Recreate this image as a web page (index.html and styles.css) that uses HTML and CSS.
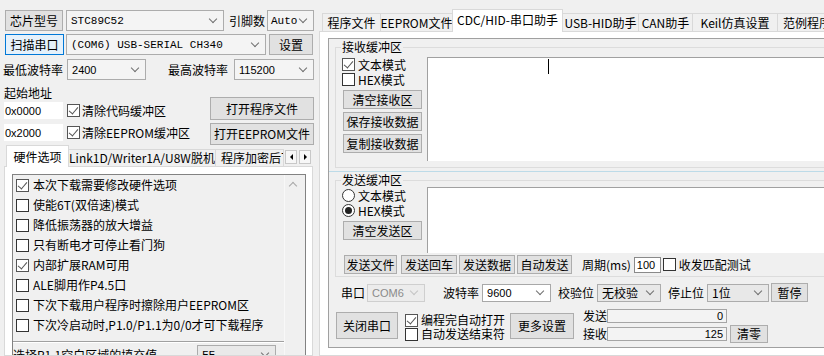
FILE: index.html
```html
<!DOCTYPE html>
<html lang="zh-CN">
<head>
<meta charset="utf-8">
<title>STC-ISP</title>
<link rel="stylesheet" href="styles.css">
</head>
<body>
<div class="app">
  <div class="left">
    <div class="row r1">
      <div class="btn b-chip">芯片型号</div>
      <div class="sel s-chip"><span class="mono">STC89C52</span></div>
      <span class="lbl l-pins">引脚数</span>
      <div class="sel s-pins"><span class="mono">Auto</span></div>
    </div>
    <div class="row r2">
      <div class="btn focus b-scan">扫描串口</div>
      <div class="sel s-port"><span class="mono">(COM6) USB-SERIAL CH340</span></div>
      <div class="btn b-set">设置</div>
    </div>
    <div class="row r3">
      <span class="lbl l-min">最低波特率</span>
      <div class="sel s-min"><span class="num">2400</span></div>
      <span class="lbl l-max">最高波特率</span>
      <div class="sel s-max"><span class="num">115200</span></div>
    </div>
    <div class="addr">
      <div class="addr-l">
        <div class="lbl">起始地址</div>
        <div class="arow a1"><div class="inp addr-in">0x0000</div><span class="cb on"></span><span class="ctext">清除代码缓冲区</span></div>
        <div class="arow a2"><div class="inp addr-in">0x2000</div><span class="cb on"></span><span class="ctext">清除EEPROM缓冲区</span></div>
      </div>
      <div class="addr-r">
        <div class="btn b-open1">打开程序文件</div>
        <div class="btn b-open2">打开EEPROM文件</div>
      </div>
    </div>
    <div class="ltabs">
      <div class="tab act lt1">硬件选项</div>
      <div class="tab lt2">Link1D/Writer1A/U8W脱机</div>
      <div class="tab lt3">程序加密后下载</div>
      <div class="tscroll"><span class="tsb tl"></span><span class="tsb tr"></span></div>
    </div>
    <div class="lpage">
      <div class="opts">
        <div class="opts-list">
          <div class="opt"><span class="cb on"></span>本次下载需要修改硬件选项</div>
          <div class="opt"><span class="cb"></span>使能6T(双倍速)模式</div>
          <div class="opt"><span class="cb"></span>降低振荡器的放大增益</div>
          <div class="opt"><span class="cb"></span>只有断电才可停止看门狗</div>
          <div class="opt"><span class="cb on"></span>内部扩展RAM可用</div>
          <div class="opt"><span class="cb"></span>ALE脚用作P4.5口</div>
          <div class="opt"><span class="cb"></span>下次下载用户程序时擦除用户EEPROM区</div>
          <div class="opt"><span class="cb"></span>下次冷启动时,P1.0/P1.1为0/0才可下载程序</div>
          <div class="hsep"></div>
          <div class="fill"><span class="lbl">选择P1.1空白区域的填充值</span><div class="sel s-ff"><span class="mono">FF</span></div></div>
        </div>
        <div class="vscroll"><span class="up"></span></div>
      </div>
    </div>
  </div>

  <div class="right">
    <div class="rtabs">
      <div class="tab rt1">程序文件</div>
      <div class="tab rt2">EEPROM文件</div>
      <div class="tab act rt3">CDC/HID-串口助手</div>
      <div class="tab rt4">USB-HID助手</div>
      <div class="tab rt5">CAN助手</div>
      <div class="tab rt6">Keil仿真设置</div>
      <div class="tab rt7">范例程序</div>
    </div>
    <div class="rpage">
      <div class="frame">
        <fieldset class="grp g-recv">
          <legend>接收缓冲区</legend>
          <div class="gbody">
            <div class="gside">
              <div class="chk c1"><span class="cb on"></span>文本模式</div>
              <div class="chk"><span class="cb"></span>HEX模式</div>
              <div class="btn gbtn gb1">清空接收区</div>
              <div class="btn gbtn">保存接收数据</div>
              <div class="btn gbtn">复制接收数据</div>
            </div>
            <div class="txt t-recv"><span class="caret"></span></div>
          </div>
        </fieldset>
        <div class="split"></div>
        <fieldset class="grp g-send">
          <legend>发送缓冲区</legend>
          <div class="gbody">
            <div class="gside">
              <div class="chk c1"><span class="rb"></span>文本模式</div>
              <div class="chk"><span class="rb on"></span>HEX模式</div>
              <div class="btn gbtn gb1">清空发送区</div>
            </div>
            <div class="txt t-send"></div>
          </div>
          <div class="row sendrow">
            <div class="btn sb1">发送文件</div>
            <div class="btn sb2">发送回车</div>
            <div class="btn sb3">发送数据</div>
            <div class="btn sb4">自动发送</div>
            <span class="lbl l-period">周期(ms)</span>
            <div class="inp period"><span class="num">100</span></div>
            <span class="cb cb-match"></span>
            <span class="lbl l-match">收发匹配测试</span>
          </div>
        </fieldset>
        <div class="row serial">
          <span class="lbl l-port">串口</span>
          <div class="sel dis s-com"><span class="num">COM6</span></div>
          <span class="lbl l-baud">波特率</span>
          <div class="sel edit s-baud"><span class="num">9600</span></div>
          <span class="lbl l-par">校验位</span>
          <div class="sel s-par">无校验</div>
          <span class="lbl l-stop">停止位</span>
          <div class="sel s-stop">1位</div>
          <div class="btn b-pause">暂停</div>
        </div>
        <div class="bottom">
          <div class="btn b-close">关闭串口</div>
          <div class="bchecks">
            <div class="chk"><span class="cb on"></span>编程完自动打开</div>
            <div class="chk"><span class="cb"></span>自动发送结束符</div>
          </div>
          <div class="btn b-more">更多设置</div>
          <div class="counters">
            <span class="lbl">发送</span>
            <div class="cnt"><span class="num">0</span></div>
            <span></span>
            <span class="lbl">接收</span>
            <div class="cnt"><span class="num">125</span></div>
            <div class="btn b-zero">清零</div>
          </div>
        </div>
      </div>
    </div>
  </div>
</div>
</body>
</html>
```

FILE: styles.css
```css
* { box-sizing: border-box; }
html, body { margin: 0; padding: 0; }
body {
  width: 824px;
  height: 356px;
  overflow: hidden;
  background: #f0f0f0;
  color: #000;
  font-family: "Noto Sans CJK SC", "Liberation Sans", sans-serif;
  font-size: 12px;
  line-height: 14px;
}
.app { display: flex; height: 356px; }
.left {
  flex: none;
  width: 319px;
  height: 356px;
  padding: 10px 5px 0 4px;
  display: flex;
  flex-direction: column;
}
.right {
  flex: none;
  width: 560px;
  height: 356px;
  display: flex;
  flex-direction: column;
}

/* generic controls */
.row { display: flex; align-items: center; flex: none; }
.lbl { white-space: nowrap; flex: none; }
.btn {
  display: flex;
  align-items: center;
  justify-content: center;
  flex: none;
  white-space: nowrap;
  background: #e1e1e1;
  border: 1px solid #adadad;
}
.btn.focus { background: #e5f1fb; border-color: #0078d7; }
.sel {
  position: relative;
  display: flex;
  align-items: center;
  flex: none;
  height: 100%;
  padding-left: 4px;
  background: #f4f4f4;
  border: 1px solid #acacac;
  white-space: nowrap;
  overflow: hidden;
}
.sel::after {
  content: "";
  position: absolute;
  right: 7px;
  top: 50%;
  width: 5px;
  height: 5px;
  margin-top: -5px;
  border-right: 1px solid #707070;
  border-bottom: 1px solid #707070;
  transform: rotate(45deg);
}
.sel.dis { background: #ececec; border-color: #cfcfcf; color: #8a8a8a; }
.sel.dis::after { border-color: #c4c4c4; }
.sel.edit { background: #fff; border-color: #a8a8a8; }
.mono { font-family: "Liberation Mono", monospace; font-size: 11px; }
.num { font-family: "Liberation Sans", sans-serif; font-size: 11px; }
.inp { background: #fff; flex: none; display: flex; align-items: center; }

.cb {
  position: relative;
  flex: none;
  width: 13px;
  height: 13px;
  border: 1px solid #333;
  background: #fff;
}
.cb.on { border-color: #555; }
.cb.on::after {
  content: "";
  position: absolute;
  left: 3px;
  top: 0;
  width: 4px;
  height: 8px;
  border-right: 1.5px solid #555;
  border-bottom: 1.5px solid #555;
  transform: rotate(40deg);
}
.rb {
  position: relative;
  flex: none;
  width: 13px;
  height: 13px;
  border: 1px solid #333;
  border-radius: 50%;
  background: #fff;
}
.rb.on::after {
  content: "";
  position: absolute;
  left: 2px;
  top: 2px;
  width: 7px;
  height: 7px;
  border-radius: 50%;
  background: #222;
}

/* tabs */
.tab {
  flex: none;
  display: flex;
  align-items: center;
  justify-content: center;
  white-space: nowrap;
  overflow: hidden;
  background: #f0f0f0;
  border: 1px solid #d9d9d9;
  border-bottom: none;
  margin-left: -1px;
}
.tab.act {
  position: relative;
  z-index: 1;
  background: #fff;
  margin-bottom: -1px;
}

/* left panel rows */
.r1 { height: 21px; }
.b-chip { margin-left: 1px; width: 58px; height: 21px; }
.s-chip { margin-left: 3px; width: 158px; }
.l-pins { margin-left: 5px; }
.s-pins { margin-left: 2px; width: 47px; padding-left: 3px; }

.r2 { height: 21px; margin-top: 3px; }
.b-scan { margin-left: 1px; width: 59px; height: 21px; }
.s-port { margin-left: 2px; width: 200px; }
.b-set { margin-left: 3px; width: 44px; height: 21px; }

.r3 { height: 21px; margin-top: 4px; }
.l-min { margin-left: -1px; }
.s-min { margin-left: 4px; width: 79px; }
.l-max { margin-left: 22px; }
.s-max { margin-left: 6px; width: 80px; }

.addr { display: flex; flex: none; margin-top: 6px; height: 59px; }
.addr-l { display: flex; flex-direction: column; }
.arow { display: flex; align-items: center; height: 17px; }
.a1 { margin-top: 2px; }
.a2 { margin-top: 5px; }
.addr-in { width: 59px; height: 17px; padding-left: 1px; font-family: "Liberation Sans", sans-serif; font-size: 11px; }
.arow .cb { margin-left: 4px; }
.ctext { margin-left: 2px; white-space: nowrap; }
.addr-r { margin-left: auto; width: 104px; display: flex; flex-direction: column; }
.b-open1 { margin-top: 11px; height: 23px; }
.b-open2 { margin-top: 3px; height: 22px; }

.ltabs { display: flex; align-items: flex-end; height: 21px; flex: none; padding-left: 3px; }
.lt1 { width: 63px; height: 22px; }
.lt2 { width: 148px; height: 17px; }
.lt3 { width: 69px; height: 17px; justify-content: flex-start; padding-left: 5px; }
.tscroll { display: flex; gap: 2px; align-self: center; margin-left: 1px; margin-top: 2px; }
.tsb {
  position: relative;
  width: 12px;
  height: 14px;
  background: #f7f7f7;
  border: 1px solid #c8c8c8;
}
.tsb::after {
  content: "";
  position: absolute;
  top: 3px;
  left: 3px;
  border: 3px solid transparent;
}
.tsb.tl::after { border-right: 3px solid #000; left: 1px; }
.tsb.tr::after { border-left: 3px solid #000; left: 4px; }

.lpage {
  flex: 1;
  min-height: 0;
  margin-right: 1px;
  border: 1px solid #d9d9d9;
  background: #fff;
  padding: 7px 6px 0 7px;
  overflow: hidden;
}
.opts { display: flex; height: 240px; border: 1px solid #828282; background: #f0f0f0; }
.opts-list { flex: 1; padding-left: 3px; }
.opt { display: flex; align-items: center; gap: 4px; height: 20px; white-space: nowrap; }
.hsep { margin: 6px 0 0 -3px; height: 2px; border-top: 1px solid #a0a0a0; border-bottom: 1px solid #fff; }
.fill { display: flex; align-items: center; height: 22px; margin: 1px 0 0 -3px; }
.s-ff { margin-left: auto; margin-right: 8px; width: 79px; height: 21px; background: #e9e9e9; }
.vscroll { flex: none; width: 21px; border-left: 1px solid #f8f8f8; }
.up {
  display: block;
  width: 6px;
  height: 6px;
  margin: 8px 0 0 5px;
  border-top: 1px solid #a8a8a8;
  border-left: 1px solid #a8a8a8;
  transform: rotate(45deg);
}

/* right panel */
.rtabs { display: flex; align-items: flex-end; height: 31px; flex: none; padding-left: 4px; }
.rtabs .tab { height: 18px; }
.rtabs .tab.act { height: 23px; padding-bottom: 3px; }
.rt1 { width: 59px; }
.rt2 { width: 73px; }
.rt3 { width: 111px; }
.rt4 { width: 77px; }
.rt5 { width: 55px; }
.rt6 { width: 86px; }
.rt7 { width: 70px; justify-content: flex-start; padding-left: 5px; }

.rpage {
  flex: 1;
  min-height: 0;
  border: 1px solid #d9d9d9;
  background: #fff;
  padding: 6px 0 0 8px;
  overflow: hidden;
}
.frame {
  width: 540px;
  height: 310px;
  border: 1px solid #a0a0a0;
  background: #f0f0f0;
  padding: 0 0 0 6px;
  display: flex;
  flex-direction: column;
}
.grp {
  margin: 1px 0 0 0;
  padding: 0 0 6px 5px;
  border: 1px solid #dcdcdc;
  min-width: 0;
}
.grp legend { padding: 0 1px; line-height: 14px; }
.gbody { display: flex; }
.gside { flex: none; width: 86px; display: flex; flex-direction: column; }
.chk { display: flex; align-items: center; gap: 3px; height: 14px; white-space: nowrap; }
.gside .chk { margin-left: 1px; height: 15px; }
.g-recv .c1 { margin-top: 3px; }
.gbtn { width: 79px; height: 19px; margin: 3px 0 0 2px; }
.txt {
  flex: 1;
  background: #fff;
  border-top: 1px solid #a0a0a0;
  border-left: 1px solid #a0a0a0;
}
.t-recv { margin-top: 3px; height: 104px; }
.caret { display: block; width: 1px; height: 15px; margin: 1px 0 0 120px; background: #000; }
.split { flex: none; height: 1px; margin: 3px 0 0 -6px; background: #bddbe8; }
.g-send { padding-bottom: 2px; }
.g-send .c1 { margin-top: 1px; }
.t-send { height: 66px; }
.sendrow { height: 19px; margin-top: 2px; }
.sendrow .btn { height: 19px; }
.sb1 { margin-left: 3px; width: 53px; }
.sb2 { margin-left: 4px; width: 56px; }
.sb3 { margin-left: 2px; width: 56px; }
.sb4 { margin-left: 2px; width: 55px; }
.l-period { margin-left: 10px; }
.period { margin-left: 3px; width: 27px; height: 16px; border: 1px solid #8a8a8a; padding-left: 2px; }
.cb-match { margin-left: 2px; }
.l-match { margin-left: 3px; }

.serial { height: 19px; margin-top: 6px; }
.serial .sel { height: 18px; align-self: flex-end; }
.l-port { margin-left: 6px; }
.s-com { margin-left: 2px; width: 58px; }
.l-baud { margin-left: 18px; }
.s-baud { margin-left: 3px; width: 69px; }
.l-par { margin-left: 7px; }
.s-par { margin-left: 3px; width: 64px; background: #e8e8e8; }
.l-stop { margin-left: 7px; }
.s-stop { margin-left: 3px; width: 62px; background: #e8e8e8; }
.b-pause { margin-left: 2px; width: 37px; height: 19px; }

.bottom { display: flex; align-items: flex-start; flex: none; margin-top: 7px; }
.b-close { margin: 3px 0 0 1px; width: 62px; height: 27px; }
.bchecks { margin: 4px 0 0 7px; width: 100px; display: flex; flex-direction: column; }
.b-more { margin: 4px 0 0 5px; width: 64px; height: 26px; }
.counters {
  margin-left: 9px;
  display: grid;
  grid-template-columns: auto 120px auto;
  grid-template-rows: 14px 18px;
  row-gap: 2px;
  align-items: center;
}
.cnt {
  width: 120px;
  height: 14px;
  border: 1px solid #a5a5a5;
  background: #f3f3f3;
  display: flex;
  align-items: center;
  justify-content: flex-end;
  padding-right: 3px;
}
.b-zero { margin-left: 3px; width: 38px; height: 18px; }
```
